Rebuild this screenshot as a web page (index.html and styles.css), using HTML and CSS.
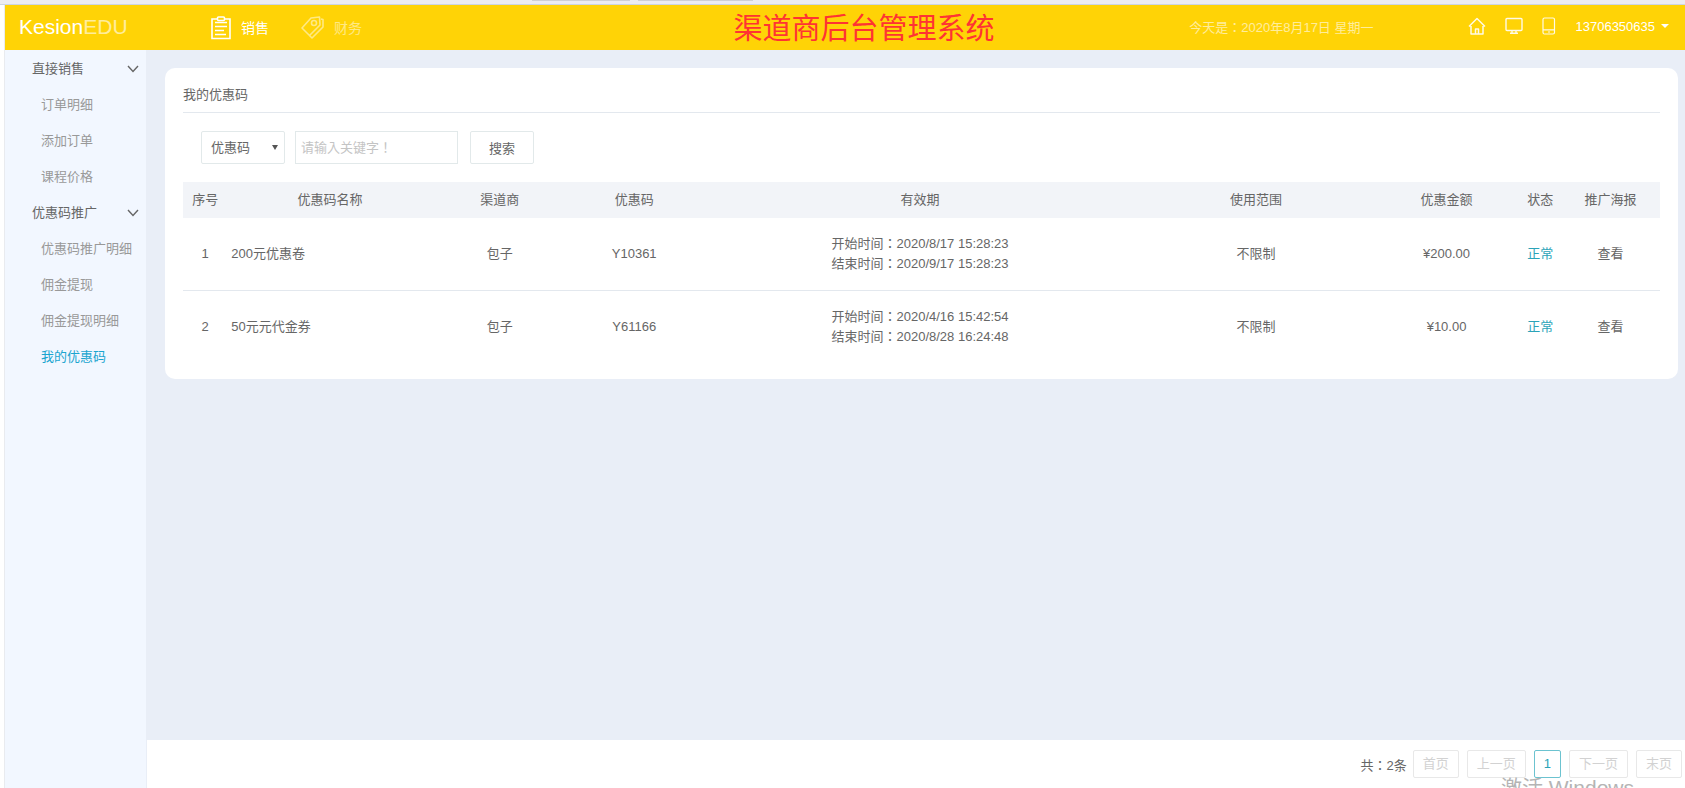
FILE: index.html
```
<!DOCTYPE html>
<html lang="zh-CN">
<head>
    <meta charset="UTF-8">
    <meta name="viewport" content="width=device-width, initial-scale=1.0">
    <title>渠道商后台管理系统</title>
    <link rel="stylesheet" href="styles.css">
</head>
<body>
    <div class="top-strip">
        <span class="strip-tab"></span>
        <span class="strip-tab wide"></span>
    </div>

    <div class="app">
        <header class="header">
            <div class="header-left">
                <a href="#" class="logo">Kesion<span>EDU</span></a>
                <nav class="main-nav">
                    <a href="#" class="active">
                        <svg width="20" height="24" viewBox="0 0 20 24" fill="none" stroke="currentColor" stroke-width="1.6">
                            <path d="M6 3H1V22.500H19V3H14"/>
                            <rect x="6.500" y="1" width="7" height="3.500" rx="1"/>
                            <path d="M4 6.500H16M4 10.500H16M4 14.500H13M4 18.500H15"/>
                        </svg>
                        销售
                    </a>
                    <a href="#">
                        <svg width="23" height="23" viewBox="0 0 23 23" fill="none" stroke="currentColor" stroke-width="1.6" stroke-linejoin="round">
                            <path d="M1 12L10 2L18.500 1L19 9L8.500 19.500Z"/>
                            <path d="M20 3L22 3.500V11L11 22L8.500 19.500"/>
                            <circle cx="13" cy="7" r="2.500"/>
                        </svg>
                        财务
                    </a>
                </nav>
            </div>
            <h1>渠道商后台管理系统</h1>
            <div class="header-right">
                <span class="today">今天是<span lang="zh-TW" class="colon">：</span>2020年8月17日 星期一</span>
                <a href="#" aria-label="首页" class="tool">
                    <svg width="18" height="18" viewBox="0 0 18 18" fill="none" stroke="currentColor" stroke-width="1.5" stroke-linejoin="round">
                        <path d="M3 9V17H15V9M1 9.500L9 1.500L17 9.500"/>
                        <path d="M7.500 17V12H10.500V17"/>
                    </svg>
                </a>
                <a href="#" aria-label="电脑版" class="tool">
                    <svg width="18" height="18" viewBox="0 0 18 18" fill="none" stroke="currentColor" stroke-width="1.4">
                        <rect x="1" y="1.500" width="16" height="12" rx="1"/>
                        <path d="M7 14V16M11 14V16M5 16.300H13"/>
                    </svg>
                </a>
                <a href="#" aria-label="手机版" class="tool">
                    <svg width="14" height="18" viewBox="0 0 14 18" fill="none" stroke="currentColor" stroke-width="1.200">
                        <rect x="1" y="1" width="11.500" height="16" rx="1.500"/>
                        <path d="M1 12.800H12.500M6 15H8"/>
                    </svg>
                </a>
                <button type="button" class="user">13706350635 <i class="caret"></i></button>
            </div>
        </header>

        <div class="body">
            <aside class="sidebar">
                <h2>直接销售
                    <svg width="12" height="8" viewBox="0 0 12 8" fill="none" stroke="currentColor" stroke-width="1.4"><path d="M1 1L6 6.500L11 1"/></svg>
                </h2>
                <ul>
                    <li><a href="#">订单明细</a></li>
                    <li><a href="#">添加订单</a></li>
                    <li><a href="#">课程价格</a></li>
                </ul>
                <h2>优惠码推广
                    <svg width="12" height="8" viewBox="0 0 12 8" fill="none" stroke="currentColor" stroke-width="1.4"><path d="M1 1L6 6.500L11 1"/></svg>
                </h2>
                <ul>
                    <li><a href="#">优惠码推广明细</a></li>
                    <li><a href="#">佣金提现</a></li>
                    <li><a href="#">佣金提现明细</a></li>
                    <li><a href="#" class="active">我的优惠码</a></li>
                </ul>
            </aside>

            <main class="main">
                <div class="content">
                    <section class="card">
                        <h3>我的优惠码</h3>
                        <form class="search">
                            <div class="select-wrap">
                                <select aria-label="搜索类型">
                                    <option>优惠码</option>
                                </select>
                            </div>
                            <input type="text" lang="zh-TW" aria-label="关键字" placeholder="请输入关键字！">
                            <button type="button">搜索</button>
                        </form>
                        <table class="list">
                            <colgroup>
                                <col class="c-no">
                                <col class="c-name">
                                <col class="c-agent">
                                <col class="c-code">
                                <col class="c-date">
                                <col class="c-range">
                                <col class="c-money">
                                <col class="c-state">
                                <col class="c-poster">
                            </colgroup>
                            <thead>
                                <tr>
                                    <th>序号</th>
                                    <th>优惠码名称</th>
                                    <th>渠道商</th>
                                    <th>优惠码</th>
                                    <th>有效期</th>
                                    <th>使用范围</th>
                                    <th>优惠金额</th>
                                    <th>状态</th>
                                    <th>推广海报</th>
                                </tr>
                            </thead>
                            <tbody>
                                <tr>
                                    <td>1</td>
                                    <td class="name">200元优惠卷</td>
                                    <td>包子</td>
                                    <td>Y10361</td>
                                    <td>开始时间<span lang="zh-TW" class="colon">：</span>2020/8/17 15:28:23<br>结束时间<span lang="zh-TW" class="colon">：</span>2020/9/17 15:28:23</td>
                                    <td>不限制</td>
                                    <td>¥200.00</td>
                                    <td class="ok">正常</td>
                                    <td><a href="#">查看</a></td>
                                </tr>
                                <tr>
                                    <td>2</td>
                                    <td class="name">50元元代金券</td>
                                    <td>包子</td>
                                    <td>Y61166</td>
                                    <td>开始时间<span lang="zh-TW" class="colon">：</span>2020/4/16 15:42:54<br>结束时间<span lang="zh-TW" class="colon">：</span>2020/8/28 16:24:48</td>
                                    <td>不限制</td>
                                    <td>¥10.00</td>
                                    <td class="ok">正常</td>
                                    <td><a href="#">查看</a></td>
                                </tr>
                            </tbody>
                        </table>
                    </section>
                </div>

                <footer class="pager">
                    <span class="total">共<span lang="zh-TW" class="colon">：</span>2条</span>
                    <button type="button" disabled>首页</button>
                    <button type="button" disabled>上一页</button>
                    <button type="button" class="current">1</button>
                    <button type="button" disabled>下一页</button>
                    <button type="button" disabled>末页</button>
                </footer>
            </main>
        </div>
    </div>

    <div class="watermark">激活 Windows</div>
</body>
</html>
```
FILE: styles.css
```
* {
    margin: 0;
    padding: 0;
    box-sizing: border-box;
}

body {
    position: relative;
    display: flex;
    flex-direction: column;
    height: 100vh;
    overflow: hidden;
    font-family: "Liberation Sans", "Noto Sans CJK SC", sans-serif;
    font-size: 13px;
    color: #666;
    background-color: #fff;
}

a {
    color: inherit;
    text-decoration: none;
}

button, input, select {
    font: inherit;
    color: inherit;
}

svg {
    display: block;
}

/* full-width punctuation sits in the middle of its box */
.colon, .search input::placeholder {
    font-family: "Liberation Sans", "Noto Sans CJK TC", sans-serif;
}

.top-strip {
    display: flex;
    gap: 8px;
    height: 5px;
    padding-left: 532px;
    background-color: #ececf1;
    border-bottom: 1px solid #ccd5e3;
}

.strip-tab {
    width: 98px;
    height: 1px;
    background-color: #cfcfd3;
}

.strip-tab.wide {
    width: 115px;
}

.app {
    flex: 1;
    display: flex;
    flex-direction: column;
    min-height: 0;
    margin-left: 4px;
    border-left: 1px solid #e9ebef;
}

/* header */
.header {
    display: flex;
    align-items: center;
    height: 45px;
    padding: 0 16px 0 14px;
    background-color: #ffd306;
    color: #fff;
}

.header-left {
    flex: 1;
    display: flex;
    align-items: center;
}

.logo {
    width: 192px;
    padding-bottom: 2px;
    font-size: 21px;
}

.logo span {
    opacity: 0.6;
}

.main-nav {
    display: flex;
    gap: 32px;
    font-size: 14px;
    line-height: 20px;
}

.main-nav a {
    display: flex;
    align-items: center;
    gap: 10px;
    opacity: 0.5;
}

.main-nav a.active {
    opacity: 1;
}

.header h1 {
    padding: 2px 0 0 40px;
    font-size: 29px;
    font-weight: normal;
    line-height: 42px;
    color: #ff3333;
}

.header-right {
    flex: 1;
    display: flex;
    align-items: center;
    justify-content: flex-end;
    gap: 19px;
    padding-bottom: 3px;
    white-space: nowrap;
}

.today {
    margin-right: 76px;
    opacity: 0.6;
}

.tool {
    opacity: 0.9;
}

.user {
    display: flex;
    align-items: center;
    gap: 6px;
    border: none;
    background: none;
    cursor: pointer;
}

.caret {
    border: 4px solid transparent;
    border-top-color: #fff;
    border-bottom: none;
}

.body {
    flex: 1;
    display: flex;
    min-height: 0;
}

/* sidebar */
.sidebar {
    width: 142px;
    padding-top: 1px;
    background-color: #f2f7ff;
    border-right: 1px solid #e9eef7;
}

.sidebar h2 {
    display: flex;
    align-items: center;
    justify-content: space-between;
    height: 36px;
    padding: 0 7px 0 27px;
    font-size: 13px;
    font-weight: normal;
    line-height: 36px;
}

.sidebar ul {
    list-style: none;
}

.sidebar li a {
    display: block;
    padding-left: 36px;
    line-height: 36px;
    color: #999;
    white-space: nowrap;
}

.sidebar li a.active {
    color: #1ba5cf;
}

/* main */
.main {
    flex: 1;
    display: flex;
    flex-direction: column;
    min-width: 0;
    background-color: #e9eef7;
}

.content {
    flex: 1;
    padding: 18px 7px 18px 18px;
}

.card {
    padding: 10px 18px 17px;
    background-color: #fff;
    border-radius: 10px;
}

.card h3 {
    font-size: 13px;
    font-weight: normal;
    line-height: 34px;
    border-bottom: 1px solid #e3e8ee;
}

.search {
    display: flex;
    padding: 18px;
}

.select-wrap {
    position: relative;
    width: 84px;
    margin-right: 10px;
}

.select-wrap::after {
    content: "";
    position: absolute;
    top: 14px;
    right: 7px;
    border: 3px solid transparent;
    border-top: 5px solid #555;
    border-bottom: none;
    pointer-events: none;
}

.search select, .search input, .search button {
    height: 33px;
    border: 1px solid #e2e9ea;
    border-radius: 2px;
    background-color: #fff;
}

.search select {
    appearance: none;
    width: 100%;
    padding-left: 9px;
}

.search input {
    width: 163px;
    margin-right: 12px;
    padding: 0 5px;
    border-radius: 0;
}

.search input::placeholder {
    color: #c4c4c4;
}

.search button {
    width: 64px;
    cursor: pointer;
}

.list {
    width: 100%;
    table-layout: fixed;
    border-collapse: collapse;
    text-align: center;
}

.c-no { width: 3%; }
.c-name { width: 13.9%; }
.c-agent { width: 9.1%; }
.c-code { width: 9.1%; }
.c-date { width: 29.6%; }
.c-range { width: 15.9%; }
.c-money { width: 9.9%; }
.c-state { width: 2.8%; }
.c-poster { width: 6.7%; }

.list th {
    font-weight: normal;
    line-height: 36px;
    background-color: #f2f4f8;
}

.list td {
    height: 72px;
    padding-top: 1px;
    line-height: 20px;
}

.list tbody tr + tr td {
    border-top: 1px solid #e3e8ee;
}

.list .name {
    padding-left: 4px;
    text-align: left;
}

.list .ok {
    color: #2ba3b8;
}

/* pager */
.pager {
    display: flex;
    align-items: center;
    justify-content: flex-end;
    gap: 8px;
    height: 48px;
    padding-right: 3px;
    background-color: #fff;
}

.total {
    margin-right: -2px;
}

.pager button {
    height: 28px;
    padding: 0 9px;
    border: 1px solid #e8e8e8;
    border-radius: 2px;
    background-color: #fff;
    line-height: 20px;
    color: #d2d2d2;
}

.pager .current {
    border-color: #6cc3d0;
    color: #2ba3b8;
}

/* system notice, cut off by the bottom edge of the window */
.watermark {
    position: absolute;
    right: 51px;
    bottom: -14px;
    font-size: 21px;
    line-height: 28px;
    color: #b4b4b4;
    pointer-events: none;
}
```
